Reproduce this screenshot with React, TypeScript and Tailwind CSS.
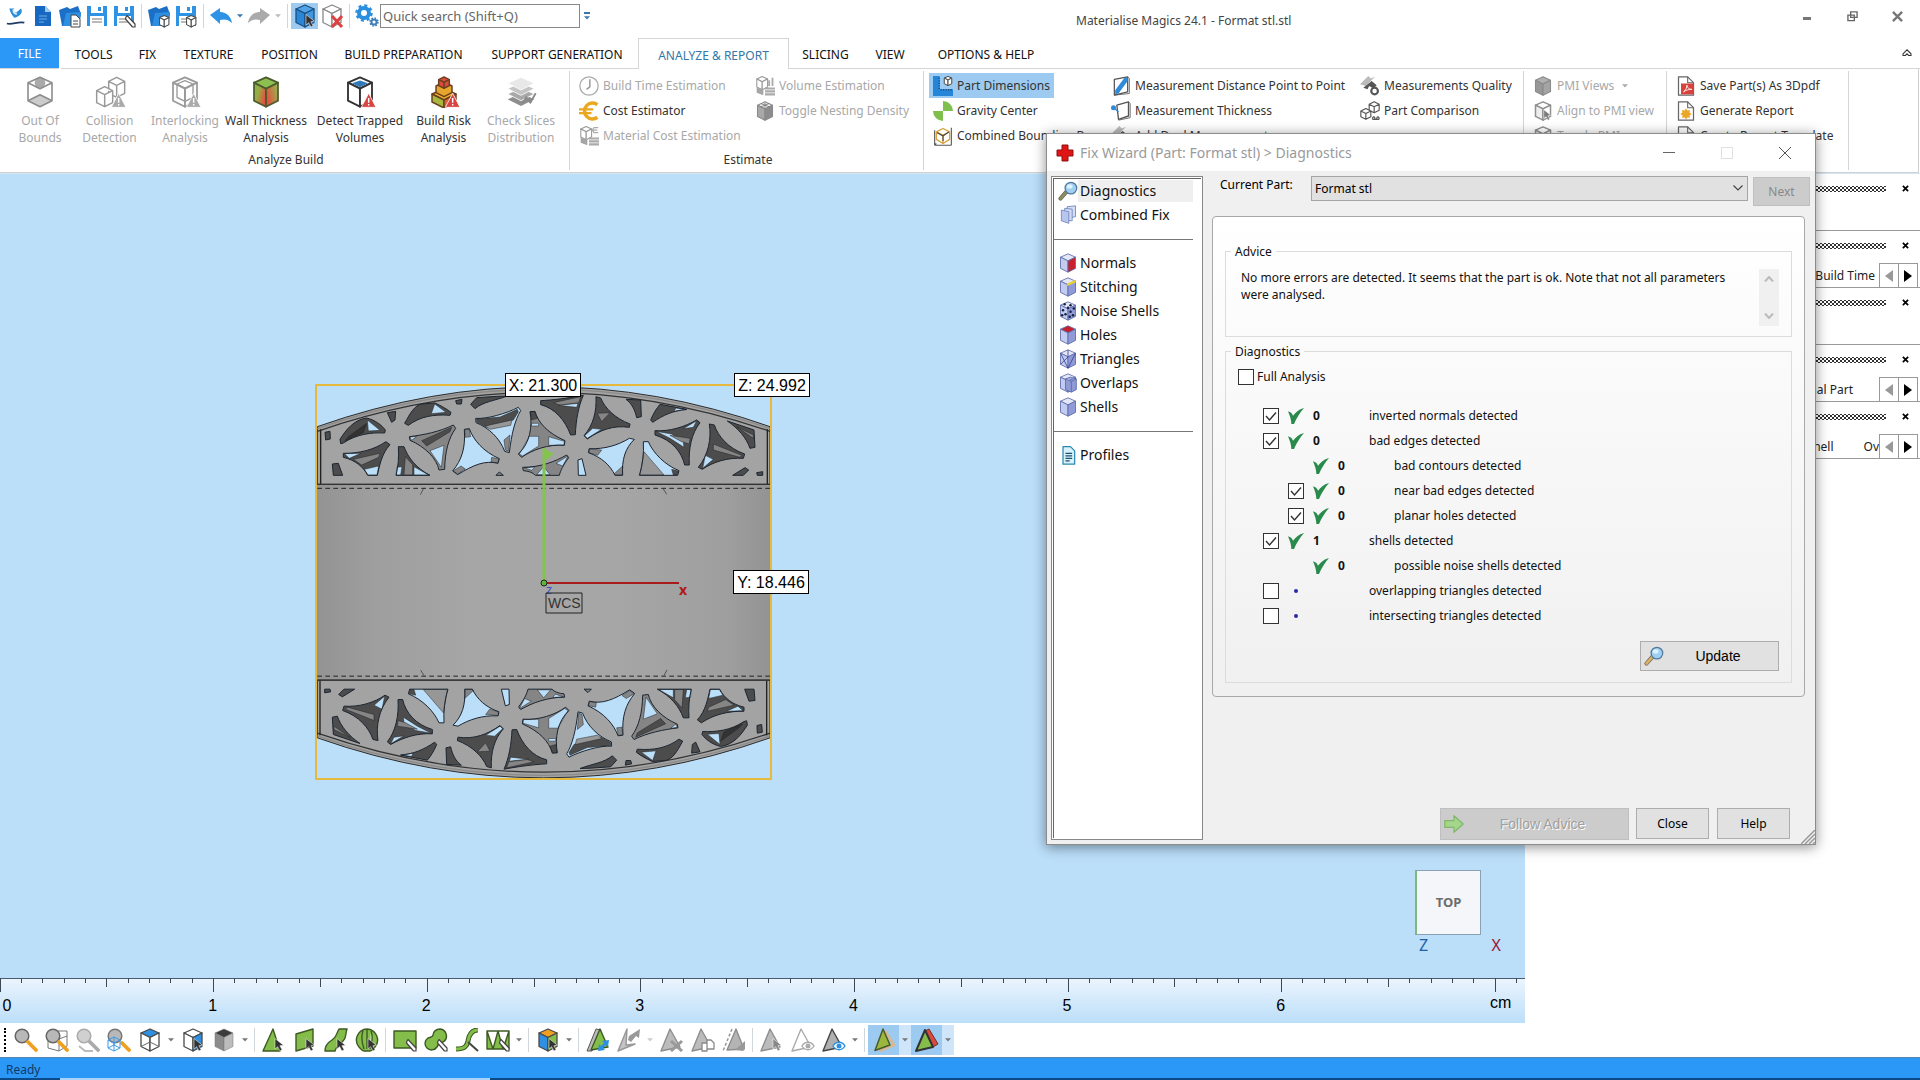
import React from 'react';
import clsx from 'clsx';

type IconProps = { className?: string };

/* ---------- icon primitives ---------- */

const Svg = ({
  className = 'size-6',
  children,
}: IconProps & { children: React.ReactNode }) => (
  <svg
    viewBox="0 0 24 24"
    className={clsx('shrink-0', className)}
    fill="none"
    strokeLinejoin="round"
    aria-hidden="true"
  >
    {children}
  </svg>
);

type CubeProps = {
  top?: string;
  left?: string;
  right?: string;
  stroke?: string;
  width?: number;
};

const Cube = ({
  top = '#fff',
  left = '#fff',
  right = '#fff',
  stroke = '#4a4a4a',
  width = 1.3,
}: CubeProps) => (
  <g stroke={stroke} strokeWidth={width}>
    <path d="M12 1 21 5 12 9.500 3 5Z" fill={top} />
    <path d="M3 5 12 9.500V23L3 18.500Z" fill={left} />
    <path d="M21 5 12 9.500V23L21 18.500Z" fill={right} />
  </g>
);

const Cursor = ({ color = '#333' }: { color?: string }) => (
  <path
    d="M13 10.500v10.500l2.700-2.300 2.200 4.300 2.200-1.200-2.200-4.100 3.500-.500Z"
    fill={color}
    stroke="#fff"
    strokeWidth=".5"
  />
);

const Warning = ({ color = '#d64541' }: { color?: string }) => (
  <g>
    <path d="M18.500 13 24 23.500H13Z" fill={color} stroke="#fff" strokeWidth=".6" />
    <path d="M18.500 16.500v3.500M18.500 21v1.200" stroke="#fff" strokeWidth="1.100" />
  </g>
);

const Pencil = () => (
  <path
    d="m14 13 1-1.500 8 8.500v3h-2.500l-7-8Z"
    fill="#fff"
    stroke="#444"
    strokeWidth="1.200"
  />
);

const Tri = ({ fill, stroke }: { fill: string; stroke: string }) => (
  <path d="M11 1 3 22.500 18 17Z" fill={fill} stroke={stroke} strokeWidth="1.500" />
);

const Caret = ({ color = '#777' }: { color?: string }) => (
  <svg viewBox="0 0 8 5" className="h-1 w-[6px]" aria-hidden="true">
    <path d="M0 0h8L4 4.500Z" fill={color} />
  </svg>
);

/* ---------- quick access icons ---------- */

const AppMark = () => (
  <Svg className="size-5">
    <path d="M4 3h6c-2 3 0 4 2 5l6-5c3 4-1 10-8 11C7 11 5 7 4 3Z" fill="#2b8fd8" />
    <path d="M9 4c-1 3 1 5 4 6" stroke="#d9effc" strokeWidth="2" />
    <path d="M1 21c7 2 13-3 21-1" stroke="#1f3c66" strokeWidth="2" />
  </Svg>
);

const FilePage = () => (
  <Svg className="size-6">
    <path d="M4 2h10l6 6v14H4Z" fill="#1668c0" />
    <path d="M14 2v6h6Z" fill="#9ccbf5" />
    <path d="M8 12h8M8 15h8M8 18h5" stroke="#6daee6" strokeWidth="1" />
  </Svg>
);

const Folder = ({ part = false }: { part?: boolean }) => (
  <Svg className="size-6">
    <path d="M1 6 9 3l3 2 8-3 3 8-2 12H4Z" fill="#1b6fc4" />
    <path d="m5 22 3-13 15-1-2 14Z" fill="#2e8fe2" />
    {part ? (
      <g transform="translate(11 11) scale(.52)">
        <Cube width={2} />
      </g>
    ) : (
      <path d="M13 11h5l4 4v8h-9ZM15 17h5M15 20h5" fill="#fff" stroke="#444" />
    )}
  </Svg>
);

const Disk = ({ part = false, edit = false }: { part?: boolean; edit?: boolean }) => (
  <Svg className="size-6">
    <path d="M2 2h20v20H2Z" fill="#2e93e4" />
    <path d="M6 2h12v7H6Z" fill="#fff" />
    <path d="M13 3h3v4h-3Z" fill="#2e93e4" />
    <path d="M5 12h14v10H5Z" fill="#fff" />
    <path d="M7 15h10M7 18h10" stroke="#777" strokeWidth="1.200" />
    {part && (
      <g transform="translate(11 11) scale(.52)">
        <Cube width={2} />
      </g>
    )}
    {edit && <Pencil />}
  </Svg>
);

const Undo = ({ color }: { color: string }) => (
  <Svg className="size-6">
    <path d="M1 11 11 4v4c7 0 11 5 12 11-4-4-8-4-12-3v4Z" fill={color} />
  </Svg>
);

const Redo = ({ color }: { color: string }) => (
  <Svg className="size-6">
    <path d="M23 11 13 4v4C6 8 2 13 1 19c4-4 8-4 12-3v4Z" fill={color} />
  </Svg>
);

const SelectPart = () => (
  <Svg className="size-6">
    <Cube top="#4fa3e6" left="#2a86d6" right="#3f97e0" stroke="#1d4f80" />
    <Cursor />
  </Svg>
);

const UnloadPart = () => (
  <Svg className="size-6">
    <Cube stroke="#888" />
    <path d="m12 12 10 11M22 12 12 23" stroke="#e04040" strokeWidth="3" />
  </Svg>
);

const Gears = () => (
  <Svg className="size-6">
    <circle cx="9" cy="9" r="5" stroke="#2b8fe0" strokeWidth="4" />
    <circle cx="9" cy="9" r="7.500" stroke="#2b8fe0" strokeWidth="2.500" strokeDasharray="3 2.900" />
    <circle cx="19" cy="18" r="2.600" stroke="#3d7fb8" strokeWidth="2" />
    <circle cx="19" cy="18" r="4" stroke="#3d7fb8" strokeWidth="1.500" strokeDasharray="1.600 1.540" />
  </Svg>
);

/* ---------- ribbon icons ---------- */

const OutOfBounds = () => (
  <Svg className="size-8">
    <circle cx="12" cy="5" r="4" fill="#aaa" />
    <path d="M3 18.500 12 14l9 4.500L12 23Z" fill="#ccc" />
    <path
      d="M12 1 21 5v13.500L12 23 3 18.500V5ZM3 5l9 4.500L21 5M3 18.500l9-4.500 9 4.500"
      stroke="#8d8d8d"
      strokeWidth="1.200"
    />
  </Svg>
);

const Collision = () => (
  <Svg className="size-8">
    <g stroke="#999" strokeWidth="1.100" fill="#fff">
      <path d="m17 1 6 3v9l-6 3-6-3V4ZM11 4l6 3 6-3M17 7v9" />
      <path d="m8 8 6 3v9l-6 3-6-3v-9ZM2 11l6 3 6-3M8 14v9" />
    </g>
    <Warning color="#aaa" />
  </Svg>
);

const Interlocking = () => (
  <Svg className="size-8">
    <Cube stroke="#999" />
    <path d="m12 3.500 6 2.500v10l-6 3-6-3V6ZM6 6l6 3 6-3M12 9v10" stroke="#999" />
    <Warning color="#aaa" />
  </Svg>
);

const WallThickness = () => (
  <Svg className="size-8">
    <defs>
      <linearGradient id="wall-l" x1="0" y1="0" x2="1" y2=".5">
        <stop offset="0" stopColor="#79b94a" />
        <stop offset=".45" stopColor="#9aab45" />
        <stop offset="1" stopColor="#e2513f" />
      </linearGradient>
      <linearGradient id="wall-r" x1="0" y1=".5" x2="1" y2="0">
        <stop offset="0" stopColor="#e2513f" />
        <stop offset="1" stopColor="#8cc152" />
      </linearGradient>
    </defs>
    <Cube top="#8cc152" left="url(#wall-l)" right="url(#wall-r)" stroke="#4c5a2c" />
  </Svg>
);

const Trapped = () => (
  <Svg className="size-8">
    <Cube stroke="#333" width={1.4} />
    <path d="M6 5.500 12 3.300l6 2.200-6 3Z" fill="#2f79b8" />
    <Warning />
  </Svg>
);

const BuildRisk = () => (
  <Svg className="size-8">
    <g stroke="#6a4020" strokeWidth="1.100">
      <path d="m12 9.500 9 4-9 4.500-9-4.500Z" fill="#f0b429" />
      <path d="M3 13.500v6L12 24v-6Z" fill="#a8b83c" />
      <path d="M21 13.500v6L12 24v-6Z" fill="#e0603c" />
      <path d="m12 4.500 6 3v5l-6 3-6-3v-5Z" fill="#e6a52c" />
      <path d="m12 .700 4 2v4.500l-4 2-4-2V2.700Z" fill="#dd4b3e" />
      <path d="m8 2.700 4 2 4-2M12 4.700v4.500" />
    </g>
    <Warning />
  </Svg>
);

const Slices = () => (
  <Svg className="size-8">
    <path d="m12 13 10 4.500-10 5-10-5Z" fill="#8e8e8e" />
    <path d="m12 9 10 4.500-10 5-10-5Z" fill="#a8a8a8" stroke="#fff" strokeWidth=".6" />
    <path d="m12 5 10 4.500-10 5-10-5Z" fill="#c4c4c4" stroke="#fff" strokeWidth=".6" />
    <path d="M12 1 22 5.500l-10 5-10-5Z" fill="#e8e8e8" stroke="#fff" strokeWidth=".6" />
    <path d="m13 21 3-5 3 4 4-7" stroke="#8a8a8a" strokeWidth="1.400" />
  </Svg>
);

const Clock = () => (
  <Svg className="size-5">
    <circle cx="12" cy="12" r="11" stroke="#aaa" strokeWidth="1.500" />
    <path d="M13 4v9l-4 3" stroke="#999" strokeWidth="1.800" />
  </Svg>
);

const Euro = () => (
  <Svg className="size-5">
    <path d="M22 4.500A9.500 9.500 0 1 0 22 19.500" stroke="#eaa820" strokeWidth="4.200" />
    <path d="M0 10h17M0 14.500h15" stroke="#eaa820" strokeWidth="2.600" />
  </Svg>
);

const GreyParts = ({ lines = true }: { lines?: boolean }) => (
  <Svg className="size-5">
    <g transform="scale(.72)">
      <Cube stroke="#999" width={1.8} />
    </g>
    <path d="M2 14v6l8 3v-7Z" fill="#a5a5a5" />
    <path d="M12 15h12M12 18.500h12M12 22h12" stroke="#aaa" strokeWidth="2.600" />
    {lines ? (
      <path d="M23 2h-5l-2 3 2 3h5M15 5h7" stroke="#aaa" strokeWidth="1.400" />
    ) : (
      <path d="M17 5v7M21 2v10" stroke="#aaa" strokeWidth="2.200" />
    )}
  </Svg>
);

const Nesting = () => (
  <Svg className="size-5">
    <Cube top="#eee" left="#a8a8a8" right="#8c8c8c" stroke="#8a8a8a" />
    <path d="M12 2v7M7 3l10 4M17 3 7 7" stroke="#777" />
  </Svg>
);

const Dimensions = () => (
  <Svg className="size-5">
    <path d="M0 0h8v16h16v8H0Z" fill="#2586d8" />
    <path d="M7.500 2v14M9 16.500h15" stroke="#134a80" strokeDasharray="1.500 1.500" strokeWidth="1.600" />
    <g transform="translate(12 0) scale(.5)">
      <Cube width={2.4} />
    </g>
  </Svg>
);

const Gravity = () => (
  <Svg className="size-5">
    <path d="M12 12V0a12 12 0 0 1 12 12Z" fill="#7fbf4d" />
    <path d="M12 12v12A12 12 0 0 1 0 12Z" fill="#7fbf4d" />
  </Svg>
);

const Bounding = () => (
  <Svg className="size-5">
    <path d="M2 23V5M2 23h20M22 2v21M2 23l2-2" stroke="#555" strokeWidth="1.300" />
    <path d="m12 3 8 4v9l-8 5-8-5V7ZM4 7l8 4 8-4M12 11v10" stroke="#d8a33c" strokeWidth="1.600" />
    <path d="m5 8 7 4 7-5M12 12v6" stroke="#444" strokeWidth="1.300" />
  </Svg>
);

const DistancePoint = () => (
  <Svg className="size-5">
    <path d="M4 4 20 1v18L4 23Z" fill="#fff" stroke="#555" strokeWidth="1.500" />
    <path d="M20 1 22 3v18l-18 2" stroke="#555" />
    <path d="M16 2.500 5 17v5l4-1L20 6V2Z" fill="#2e8bd8" />
  </Svg>
);

const Thickness = () => (
  <Svg className="size-5">
    <path d="m7 5 14-4v17L9 22Z" fill="#fff" stroke="#555" strokeWidth="1.600" />
    <path d="m21 1 2 2v17l-14 3" stroke="#555" />
    <circle cx="3" cy="8" r="3" fill="#2e8bd8" />
    <path d="M5 10 9 13" stroke="#2e8bd8" strokeWidth="1.500" />
  </Svg>
);

const Caliper = () => (
  <Svg className="size-5">
    <path d="M0 10 10 0l3 3 5-2-8 8-3 3Z" fill="#bbb" />
    <path d="m4 14 10-8 6 5-4 4-5-3-2 4Z" fill="#555" />
    <circle cx="17.500" cy="18" r="4" stroke="#555" strokeWidth="2.600" />
  </Svg>
);

const Comparison = () => (
  <Svg className="size-5">
    <g stroke="#555" strokeWidth="1.400" fill="#fff">
      <path d="m17 1 6 3v7l-6 3-6-3V4ZM11 4l6 3 6-3M17 7v7" />
      <path d="m7 9 6 3v7l-6 3-6-3v-7ZM1 12l6 3 6-3M7 15v7" />
      <path d="M15 22c0-4 3-4 3 0M20 22c0-4 3-4 3 0M15 22h8" />
    </g>
  </Svg>
);

const PmiCube = () => (
  <Svg className="size-5">
    <Cube top="#b0b0b0" left="#989898" right="#a4a4a4" stroke="#8a8a8a" />
  </Svg>
);

const PmiAlign = () => (
  <Svg className="size-5">
    <Cube stroke="#8f8f8f" left="#eee" width={1.8} />
    <Cursor color="#7a7a7a" />
  </Svg>
);

const Doc = ({ kind }: { kind: 'pdf' | 'report' | 'blank' }) => (
  <Svg className="size-5">
    <path d="M3 1h11l7 7v15H3Z" fill="#fff" stroke="#666" strokeWidth="1.500" />
    <path d="M14 1v7h7" stroke="#666" strokeWidth="1.300" />
    {kind === 'pdf' && (
      <>
        <path d="M6 9h15v13H6Z" fill="#d8423c" />
        <path d="M9 19c3-2 4-5 4-8 1 4 3 5 6 5-4 0-7 1-10 3Z" stroke="#fff" />
      </>
    )}
    {kind === 'report' && (
      <path
        d="m12 9 1.700 2.400 3-.500-.500 3L19 15.500l-2.700 1.700.500 3-3-.500L12 22l-1.700-2.300-3 .500.500-3L5 15.500l2.700-1.700-.500-3 3 .500Z"
        fill="#eaa72a"
      />
    )}
  </Svg>
);

/* ---------- wizard icons ---------- */

const Magnifier = ({ handle = '#8a8f5a' }: { handle?: string }) => (
  <Svg className="size-5">
    <path d="m3 21 7-8" stroke="#666" strokeWidth="5" strokeLinecap="round" />
    <path d="m3 21 7-8" stroke={handle} strokeWidth="3.200" strokeLinecap="round" />
    <circle cx="15.500" cy="8.500" r="7" fill="#9fd0f2" stroke="#54789c" strokeWidth="1.500" />
    <ellipse cx="14" cy="6.500" rx="3.500" ry="2.500" fill="#dff1fd" />
  </Svg>
);

const lilac = { top: '#e4e7f8', left: '#c3cbf0', right: '#8f9ad6', stroke: '#5a6aa8' };

const WizCube = ({
  children,
  ...rest
}: CubeProps & { children?: React.ReactNode }) => (
  <Svg className="size-5">
    <Cube {...lilac} {...rest} width={1} />
    {children}
  </Svg>
);

const CombinedIcon = () => (
  <Svg className="size-5">
    <g fill="#d5ddf5" stroke="#6c82bd">
      <path d="m11 2 10-1v13l-10 2Z" />
      <path d="m8 4 9 1v14l-9-1Z" />
      <path d="m4 6 9 2v14l-9-3Z" fill="#b8c6ee" />
    </g>
  </Svg>
);

const NoiseIcon = () => (
  <WizCube>
    {[
      [8, 4],
      [15, 5],
      [6, 11],
      [9, 16],
      [5, 17],
      [15, 13],
      [19, 9],
      [18, 17],
      [14, 19],
      [12, 8],
    ].map(([x, y]) => (
      <circle key={`${x}-${y}`} cx={x} cy={y} r="1.500" fill="#16213f" />
    ))}
  </WizCube>
);

const ProfilesIcon = () => (
  <Svg className="size-5">
    <path d="M6 2h9l5 5v16H6Z" fill="#d9f1fa" stroke="#2b8ab0" strokeWidth="1.500" />
    <path d="M9 10h8M9 13h8M9 16h8M9 19h5" stroke="#1d4f70" strokeWidth="1.300" />
  </Svg>
);

const GreenCheck = () => (
  <Svg className="size-4">
    <path d="M0 5c4 1 6 3 7.500 6.500C11 7 16 2 24 0 18 7 13 15 9 24H5C5 18 3 12 0 5Z" fill="#2a8a4c" />
  </Svg>
);

/* ---------- bottom toolbar icons ---------- */

const Zoomer = ({
  grey = false,
  children,
}: {
  grey?: boolean;
  children?: React.ReactNode;
}) => (
  <Svg>
    {children}
    <circle cx="8" cy="8" r="6.800" fill={grey ? '#d0d0d0' : '#b8b8b8'} stroke={grey ? '#aaa' : '#666'} strokeWidth="1.500" />
    <path d="m14 14 8 8" stroke={grey ? '#aaa' : '#f0a020'} strokeWidth="3.800" strokeLinecap="round" />
  </Svg>
);

const GREEN = '#84bd4a';
const DARK = '#3d5a22';

const Mark = {
  triangle: 'M11 1 1 23h17Z',
  plane: 'M3 6 20 1v17L3 23Z',
  surface: 'M23 1H15C12 6 13 9 8 12 3 15 1 18 1 23h10c1-5 8-8 10-13 1-3 1-6 2-9Z',
  shell: 'M12 1a11 11 0 0 0-8 18c2 2 3 4 5 4h6c2 0 3-2 5-4A11 11 0 0 0 12 1ZM12 1v20M8 3c-2 5-1 12 1 18M16 3c2 5 1 12-1 18',
  rect: 'M1 3h22v17H1Z',
  blob: 'M16 1a7 7 0 0 1 3 13c-3 1-5 2-6 5a6.500 6.500 0 1 1-9-9c3-1 5-1 5-3 0-3 3-6 7-6Z',
  zigzag: 'M1 3h22v18H1ZM1 3l6 18L12 3l5 18 6-18',
};

const MarkIcon = ({ d, tool }: { d: string; tool: 'cursor' | 'pencil' }) => (
  <Svg>
    <path d={d} fill={GREEN} stroke={DARK} strokeWidth="1.400" />
    {tool === 'cursor' ? <Cursor /> : <Pencil />}
  </Svg>
);

const CurveMark = () => (
  <Svg>
    <path d="M1 21c9 0 11-3 12-8 1-6 4-11 10-11" stroke={DARK} strokeWidth="5" />
    <path d="M1 21c9 0 11-3 12-8 1-6 4-11 10-11" stroke={GREEN} strokeWidth="2.800" />
    <path d="m13 14 10 9" stroke="#444" strokeWidth="2" />
  </Svg>
);

const GreyTri = ({ children, fill = '#bcbcbc', stroke = '#8e8e8e' }: {
  children?: React.ReactNode;
  fill?: string;
  stroke?: string;
}) => (
  <Svg>
    <path d="M10 1 1 23l19-4Z" fill={fill} stroke={stroke} strokeWidth="1.400" />
    {children}
  </Svg>
);

const Eye = ({ color }: { color: string }) => (
  <g>
    <path d="M11 18c3-5 9-5 12 0-3 5-9 5-12 0Z" fill="#fff" stroke={color} strokeWidth="1.400" />
    <circle cx="17" cy="18" r="2.500" fill={color} />
  </g>
);

/* ---------- title bar and tabs ---------- */

const Divider = () => <span className="h-6 w-px bg-gray-300" />;

const QatButton = ({
  label,
  active,
  children,
}: {
  label: string;
  active?: boolean;
  children: React.ReactNode;
}) => (
  <button
    type="button"
    aria-label={label}
    className={clsx(
      'grid h-[26px] w-[27px] shrink-0 place-items-center',
      active && 'bg-[#9ccaf0]',
    )}
  >
    {children}
  </button>
);

const Gap = ({ children }: { children: React.ReactNode }) => (
  <span className="grid w-2 shrink-0 place-items-center">{children}</span>
);

const TitleBar = () => (
  <header className="flex h-[38px] items-start">
    <div className="flex items-center pt-[3px] pl-[2px]">
      <QatButton label="Magics"><AppMark /></QatButton>
      <QatButton label="New"><FilePage /></QatButton>
      <QatButton label="Load project"><Folder /></QatButton>
      <QatButton label="Save project"><Disk /></QatButton>
      <QatButton label="Save project as"><Disk edit /></QatButton>
      <Gap><Divider /></Gap>
      <QatButton label="Import part"><Folder part /></QatButton>
      <QatButton label="Save part as"><Disk part /></QatButton>
      <Gap><Divider /></Gap>
      <QatButton label="Undo"><Undo color="#2e93e4" /></QatButton>
      <span className="grid w-[11px] place-items-center"><Caret color="#3a78ad" /></span>
      <QatButton label="Redo"><Redo color="#aaa" /></QatButton>
      <span className="grid w-[11px] place-items-center"><Caret color="#bbb" /></span>
      <Gap><Divider /></Gap>
      <QatButton label="Select part" active><SelectPart /></QatButton>
      <QatButton label="Unload part"><UnloadPart /></QatButton>
      <Gap><Divider /></Gap>
      <QatButton label="Settings"><Gears /></QatButton>
      <input
        type="text"
        aria-label="Quick search"
        placeholder="Quick search (Shift+Q)"
        className="h-6 w-[200px] border border-[#888] px-[2px] text-[13px] placeholder:text-[#666]"
      />
      <span className="ml-1 flex flex-col items-center gap-[2px]">
        <span className="h-[2px] w-[6px] bg-[#3a78ad]" />
        <Caret color="#3a78ad" />
      </span>
    </div>
    <h1 className="ml-[486px] flex-1 pt-3 text-xs leading-[17px] whitespace-nowrap text-[#444]">
      Materialise Magics 24.1 - Format stl.stl
    </h1>
    <div className="flex items-center gap-[33px] pt-2 pr-[17px]">
      <button type="button" aria-label="Minimize" className="grid h-4 w-3 place-items-center">
        <span className="mt-1 h-[3px] w-2 bg-[#777]" />
      </button>
      <button type="button" aria-label="Restore" className="grid h-4 w-3 place-items-center">
        <svg viewBox="0 0 12 12" className="size-[11px]" fill="#fff" stroke="#666" strokeWidth="1.500">
          <path d="M4 1h7v6H4ZM1 4.500h7v6H1Z" />
        </svg>
      </button>
      <button type="button" aria-label="Close window" className="grid h-4 w-3 place-items-center">
        <svg viewBox="0 0 12 12" className="size-[11px]" stroke="#777" strokeWidth="2.600">
          <path d="m1 1 10 10M11 1 1 11" />
        </svg>
      </button>
    </div>
  </header>
);

const tabs = [
  { label: 'TOOLS', width: 'w-[65px]' },
  { label: 'FIX', width: 'w-[43px]' },
  { label: 'TEXTURE', width: 'w-[79px]' },
  { label: 'POSITION', width: 'w-[83px]' },
  { label: 'BUILD PREPARATION', width: 'w-[145px]' },
  { label: 'SUPPORT GENERATION', width: 'w-[162px]' },
  { label: 'ANALYZE & REPORT', width: 'w-[151px]', active: true },
  { label: 'SLICING', width: 'w-[73px]' },
  { label: 'VIEW', width: 'w-[56px]' },
  { label: 'OPTIONS & HELP', width: 'w-[136px]' },
];

const TabRow = () => (
  <nav className="flex h-[31px] text-xs">
    <button
      type="button"
      className="mr-[2px] w-[59px] border-b border-[#d5d5d5] bg-[#2b98f8] pt-px text-white"
    >
      FILE
    </button>
    {tabs.map(({ label, width, active }) => (
      <button
        key={label}
        type="button"
        className={clsx(
          'pt-1 whitespace-nowrap',
          width,
          active
            ? 'border-x border-t border-[#d5d5d5] text-[#3277a8]'
            : 'border-b border-[#d5d5d5] text-[#111]',
        )}
      >
        {label}
      </button>
    ))}
    <div className="flex flex-1 items-center justify-end border-b border-[#d5d5d5] pr-2">
      <button type="button" aria-label="Collapse ribbon">
        <svg viewBox="0 0 12 10" className="h-2 w-[10px]" fill="none" stroke="#333" strokeWidth="1.300">
          <path d="M1 6 6 1l5 5v2H8L6 6 4 8H1Z" />
        </svg>
      </button>
    </div>
  </nav>
);

/* ---------- ribbon ---------- */

const BigButton = ({
  lines,
  width,
  icon,
  disabled,
}: {
  lines: [string, string];
  width: string;
  icon: React.ReactNode;
  disabled?: boolean;
}) => (
  <button
    type="button"
    disabled={disabled}
    className={clsx(
      'flex shrink-0 flex-col items-center pt-[5px] text-xs leading-[17px] whitespace-nowrap',
      width,
      disabled ? 'text-[#a8a8a8]' : 'text-[#333]',
    )}
  >
    {icon}
    <span className="mt-1">{lines[0]}</span>
    <span>{lines[1]}</span>
  </button>
);

const SmallButton = ({
  label,
  icon,
  disabled,
  active,
  caret,
}: {
  label: string;
  icon: React.ReactNode;
  disabled?: boolean;
  active?: boolean;
  caret?: boolean;
}) => (
  <button
    type="button"
    disabled={disabled}
    className={clsx(
      'flex h-[25px] items-center gap-1 px-1 text-xs whitespace-nowrap',
      disabled ? 'text-[#a8a8a8]' : 'text-[#333]',
      active && 'bg-[#9ccaf0]',
    )}
  >
    {icon}
    {label}
    {caret && <span className="ml-1"><Caret color="#aaa" /></span>}
  </button>
);

const Group = ({
  title,
  width,
  children,
}: {
  title?: string;
  width: string;
  children: React.ReactNode;
}) => (
  <section className={clsx('my-[2px] flex shrink-0 flex-col border-r border-[#d5d5d5]', width)}>
    <div className="flex h-[80px]">{children}</div>
    <h2 className="pl-[3px] text-center text-xs leading-5 text-[#333]">{title}</h2>
  </section>
);

const Column = ({ width, children }: { width: string; children: React.ReactNode }) => (
  <div className={clsx('flex shrink-0 flex-col items-start pt-[2px]', width)}>{children}</div>
);

const Ribbon = () => (
  <div className="mr-px flex h-[104px] border-r border-b border-[#d0d0d0]">
    <Group title="Analyze Build" width="w-[570px]">
      <div className="flex pl-[5px]">
        <BigButton lines={['Out Of', 'Bounds']} width="w-[70px]" icon={<OutOfBounds />} disabled />
        <BigButton lines={['Collision', 'Detection']} width="w-[69px]" icon={<Collision />} disabled />
        <BigButton lines={['Interlocking', 'Analysis']} width="w-[82px]" icon={<Interlocking />} disabled />
        <BigButton lines={['Wall Thickness', 'Analysis']} width="w-[80px]" icon={<WallThickness />} />
        <BigButton lines={['Detect Trapped', 'Volumes']} width="w-[108px]" icon={<Trapped />} />
        <BigButton lines={['Build Risk', 'Analysis']} width="w-[59px]" icon={<BuildRisk />} />
        <BigButton lines={['Check Slices', 'Distribution']} width="w-[96px]" icon={<Slices />} disabled />
      </div>
    </Group>
    <Group title="Estimate" width="w-[354px]">
      <Column width="w-[181px] pl-[5px]">
        <SmallButton label="Build Time Estimation" icon={<Clock />} disabled />
        <SmallButton label="Cost Estimator" icon={<Euro />} />
        <SmallButton label="Material Cost Estimation" icon={<GreyParts />} disabled />
      </Column>
      <Column width="w-[170px]">
        <SmallButton label="Volume Estimation" icon={<GreyParts lines={false} />} disabled />
        <SmallButton label="Toggle Nesting Density" icon={<Nesting />} disabled />
      </Column>
    </Group>
    <Group width="w-[600px]">
      <Column width="w-[182px] pl-[5px]">
        <SmallButton label="Part Dimensions" icon={<Dimensions />} active />
        <SmallButton label="Gravity Center" icon={<Gravity />} />
        <SmallButton label="Combined Bounding Box" icon={<Bounding />} />
      </Column>
      <Column width="w-[250px] pl-[1px]">
        <SmallButton label="Measurement Distance Point to Point" icon={<DistancePoint />} />
        <SmallButton label="Measurement Thickness" icon={<Thickness />} />
        <SmallButton label="Add Dual Measurement" icon={<Caliper />} />
      </Column>
      <Column width="w-[160px]">
        <SmallButton label="Measurements Quality" icon={<Caliper />} />
        <SmallButton label="Part Comparison" icon={<Comparison />} />
      </Column>
    </Group>
    <Group width="w-[143px]">
      <Column width="w-[142px] pl-[5px]">
        <SmallButton label="PMI Views" icon={<PmiCube />} disabled caret />
        <SmallButton label="Align to PMI view" icon={<PmiAlign />} disabled />
        <SmallButton label="Toggle PMI" icon={<PmiAlign />} disabled />
      </Column>
    </Group>
    <Group width="w-[182px]">
      <Column width="w-[180px] pl-[5px]">
        <SmallButton label="Save Part(s) As 3Dpdf" icon={<Doc kind="pdf" />} />
        <SmallButton label="Generate Report" icon={<Doc kind="report" />} />
        <SmallButton label="Create Report Template" icon={<Doc kind="blank" />} />
      </Column>
    </Group>
  </div>
);

/* ---------- 3D part ---------- */

const SHADE = '#4c4c4c';
const MID = '#858585';
const SKY = '#bbdef9';

// cut-outs of the lattice band, drawn at three units per pixel
const holes: { d: string; fill: string }[] = [
  { d: 'M75 187 90 184 91 207 77 210Z', fill: SHADE },
  { d: 'M97 282 115 280 128 316 100 316Z', fill: SHADE },
  { d: 'M120 208C138 180 160 150 200 144 225 150 245 165 256 180L254 189C215 187 170 192 130 219L122 221Z', fill: SHADE },
  { d: 'M262 128 287 124 285 150 275 157Z', fill: SHADE },
  { d: 'M314 160C330 130 345 105 365 102L405 99C425 108 445 120 453 127L450 136C400 132 360 140 325 166Z', fill: SHADE },
  { d: 'M467 92 486 88 484 102 470 102Z', fill: SHADE },
  { d: 'M512 103 530 83 590 79 622 78C585 92 550 95 525 116Z', fill: SHADE },
  { d: 'M527 145C560 148 620 130 655 112L662 122C645 150 635 190 628 248L614 244C600 205 565 172 528 158Z', fill: SKY },
  { d: 'M493 178 508 176C520 210 550 245 598 266L594 280C555 270 520 285 473 314L458 303C485 270 497 235 493 178Z', fill: SKY },
  { d: 'M328 200C370 195 420 185 460 165L467 175C445 205 435 245 434 298L417 300C410 265 375 230 330 211Z', fill: MID },
  { d: 'M130 250C180 250 220 240 258 215L270 224C245 250 238 290 232 316L203 316C190 290 165 270 130 262Z', fill: SHADE },
  { d: 'M295 230 312 230C325 265 350 295 390 316L288 316C295 290 297 260 295 230Z', fill: SHADE },
  { d: 'M588 316 598 306 610 316Z', fill: MID },
  { d: 'M690 125 705 124C715 160 745 190 795 212L793 226C745 222 695 240 665 262L655 252C690 220 698 170 690 125Z', fill: MID },
  { d: 'M722 92C760 90 800 85 850 76 835 110 828 150 826 194L812 195C795 150 765 115 722 104Z', fill: SHADE },
  { d: 'M888 80 902 84C915 115 945 145 990 162L988 172C940 165 900 180 862 207L852 197C880 165 890 125 888 80Z', fill: SHADE },
  { d: 'M978 88 1022 90 1024 140 1010 143C1005 120 995 100 978 88Z', fill: SHADE },
  { d: 'M1052 150C1060 130 1070 115 1080 103L1160 118C1120 122 1090 135 1058 157Z', fill: SHADE },
  { d: 'M1065 182C1110 185 1155 170 1190 150L1200 158C1175 190 1165 235 1168 285L1154 285C1145 245 1115 210 1065 195Z', fill: SHADE },
  { d: 'M988 205 1003 208C975 235 965 270 968 316L945 316C930 285 905 262 865 248L868 236C915 238 955 225 988 205Z', fill: SKY },
  { d: 'M1030 215 1045 215C1060 250 1095 285 1137 302L1133 316 1018 316C1028 285 1032 250 1030 215Z', fill: SKY },
  { d: 'M1228 162 1243 165C1255 200 1285 235 1334 252L1330 265C1285 262 1240 275 1207 298L1195 292C1225 255 1235 205 1228 162Z', fill: SHADE },
  { d: 'M1282 153 1362 180 1365 232 1350 235C1340 205 1315 175 1282 153Z', fill: SHADE },
  { d: 'M1298 316 1335 293 1346 300 1330 316Z', fill: SHADE },
  { d: 'M1370 308 1388 305 1388 316 1372 316Z', fill: SHADE },
  { d: 'M668 292C720 292 765 275 800 255L806 263C790 285 782 300 778 316L706 316C700 308 685 303 670 302Z', fill: MID },
  { d: 'M834 270 846 266 858 316 835 316Z', fill: SKY },
];

// what shows through those cut-outs: the far wall and the background
const seenThrough: { d: string; fill: string }[] = [
  { d: 'M202 150 240 181 205 183Z', fill: SKY },
  { d: 'M145 200 200 160 190 188 135 212Z', fill: '#333' },
  { d: 'M404 102 438 127 394 131Z', fill: SKY },
  { d: 'M530 147 600 141 652 118 655 126 640 150 560 172 530 156Z', fill: SHADE },
  { d: 'M556 168 636 150 632 166 570 178Z', fill: '#979797' },
  { d: 'M612 210 630 195 626 244 616 240Z', fill: MID },
  { d: 'M494 179 507 177 512 200 496 202Z', fill: MID },
  { d: 'M459 303 483 288 496 297 473 312Z', fill: MID },
  { d: 'M575 262 597 267 593 279 573 276Z', fill: MID },
  { d: 'M330 201 350 199 335 211Z', fill: SKY },
  { d: 'M365 212 455 172 450 185 380 228Z', fill: SHADE },
  { d: 'M390 242 432 226 424 292Z', fill: SKY },
  { d: 'M133 251 183 250 148 265Z', fill: SKY },
  { d: 'M160 268 240 250 236 262 185 285Z', fill: MID },
  { d: 'M193 298 236 288 231 315 204 315Z', fill: SKY },
  { d: 'M290 292 306 290 302 315 289 315Z', fill: SKY },
  { d: 'M316 260 338 284 338 315 312 315Z', fill: MID },
  { d: 'M342 290 386 315 342 315Z', fill: SKY },
  { d: 'M691 126 704 125 712 145 695 150Z', fill: SHADE },
  { d: 'M695 160 716 160 716 168 694 168Z', fill: SKY },
  { d: 'M688 199 716 199 716 228 668 258 658 252Z', fill: SKY },
  { d: 'M746 200 793 214 792 225 746 226Z', fill: SKY },
  { d: 'M776 106 834 100 830 112Z', fill: SKY },
  { d: 'M760 98 842 80 836 98 780 105Z', fill: MID },
  { d: 'M892 130 930 128 905 155Z', fill: MID },
  { d: 'M878 175 905 178 862 205 854 197Z', fill: SKY },
  { d: 'M1128 114 1160 119 1122 124Z', fill: SKY },
  { d: 'M1068 184 1115 192 1150 215 1152 232 1110 205Z', fill: SKY },
  { d: 'M1110 196 1170 205 1168 222 1145 215Z', fill: MID },
  { d: 'M1150 176 1190 152 1180 172Z', fill: SKY },
  { d: 'M867 237 905 240 893 256 867 248Z', fill: MID },
  { d: 'M942 312 968 288 967 315 946 315Z', fill: MID },
  { d: 'M1032 245 1092 315 1020 315Z', fill: '#979797' },
  { d: 'M1115 298 1135 303 1132 315 1120 315Z', fill: SHADE },
  { d: 'M1216 256 1240 268 1208 295Z', fill: SKY },
  { d: 'M1240 222 1325 256 1320 262 1240 240Z', fill: MID },
  { d: 'M1310 170 1360 195 1360 205Z', fill: MID },
  { d: 'M672 293 704 291 696 301Z', fill: SKY },
  { d: 'M710 314 731 290 750 314Z', fill: SKY },
  { d: 'M768 280 804 258 788 288Z', fill: SKY },
];

const LatticeBand = () => (
  <g>
    <path d="M52 170Q731-70 1410 170V343H52Z" fill="#a3a3a3" stroke="#2b2b2b" strokeWidth="3" />
    <path d="M52 184Q731-50 1410 184" fill="none" stroke="#333" strokeWidth="3.500" />
    <path d="M52 176Q731-61 1410 176" fill="none" stroke="#8b8b8b" strokeWidth="4" />
    {holes.map(({ d, fill }) => (
      <path key={d} d={d} fill={fill} />
    ))}
    {seenThrough.map(({ d, fill }) => (
      <path key={d} d={d} fill={fill} stroke="#222" strokeWidth="1.500" />
    ))}
    {holes.map(({ d }) => (
      <path key={d} d={d} fill="none" stroke="#1c2530" strokeWidth="3" />
    ))}
    <path d="M62 178V343M1402 178V343" stroke="#222" strokeWidth="4" />
    <path d="M52 343H1410" stroke="#333" strokeWidth="3.500" />
    <path d="M52 355H1410" stroke="#222" strokeWidth="3" strokeDasharray="14 10" />
    <path d="M370 357 361 374M1090 357 1100 373" stroke="#444" strokeWidth="2.500" />
  </g>
);

const PartView = () => (
  <svg viewBox="0 0 520 420" className="h-[420px] w-[520px]" role="img" aria-label="Format stl">
    <defs>
      <linearGradient id="body">
        <stop offset="0" stopColor="#939393" />
        <stop offset=".12" stopColor="#9e9e9e" />
        <stop offset=".35" stopColor="#a6a6a6" />
        <stop offset=".65" stopColor="#a6a6a6" />
        <stop offset=".9" stopColor="#9f9f9f" />
        <stop offset="1" stopColor="#939393" />
      </linearGradient>
    </defs>
    <path d="M17 113H470V312H17Z" fill="url(#body)" />
    <g transform="scale(.33333)">
      <LatticeBand />
    </g>
    <g transform="translate(487.333 424.500) rotate(180) scale(.33333)">
      <LatticeBand />
    </g>
    <path d="M16 15H471V409H16Z" fill="none" stroke="#e6b83c" strokeWidth="2" />
    <path d="M244 78V212" stroke="#84c44e" strokeWidth="3" />
    <path d="M243 78 254 84 243 92Z" fill="#84c44e" />
    <path d="M244 213H379" stroke="#a81c1c" strokeWidth="2" />
    <circle cx="244" cy="213" r="3" fill="#5cb83c" stroke="#222" />
    <text x="379" y="225" fontSize="14" fontWeight="700" fill="#b01818">x</text>
    <text x="246" y="224" fontSize="13" fill="#3c50c8">z</text>
    <path d="M246 223H282V243H246Z" fill="none" stroke="#222" strokeWidth="1" />
    <text x="248" y="238" fontSize="14" fill="#333" fontFamily="Liberation Sans, sans-serif">WCS</text>
  </svg>
);

const Dimension = ({ text, className }: { text: string; className: string }) => (
  <span
    className={clsx(
      "absolute grid h-6 w-[76px] place-items-center border border-black bg-white font-['Liberation_Sans',sans-serif] text-base whitespace-nowrap text-black",
      className,
    )}
  >
    {text}
  </span>
);

const Ruler = () => {
  const ticks = Array.from({ length: 72 }, (_, i) => i);
  return (
    <svg
      className="h-[45px] w-full bg-linear-to-b from-[#ecf5fd] to-[#bbdef9]"
      role="img"
      aria-label="Ruler in centimetres"
    >
      <path d="M0 .500H4000" stroke="#4a5a70" />
      {ticks.map((i) => {
        const x = Math.floor(i * 21.36) + 0.5;
        const end = i % 10 === 0 ? 14 : i % 5 === 0 ? 9 : 5;
        return <path key={i} d={`M${x} 0V${end}`} stroke="#3c4858" />;
      })}
      <g fontSize="16" fill="#000" fontFamily="Liberation Sans, sans-serif">
        {[0, 1, 2, 3, 4, 5, 6].map((n) => (
          <text key={n} x={n === 0 ? 7 : n * 213.6 - 1} y="33" textAnchor="middle">
            {n}
          </text>
        ))}
        <text x="1490" y="30">cm</text>
      </g>
    </svg>
  );
};

const Viewport = () => (
  <main className="flex min-w-0 flex-1 flex-col">
    <div className="relative flex-1 bg-[#bbdef9]">
      <div className="absolute top-[196px] left-[300px]">
        <PartView />
        <Dimension text="X: 21.300" className="top-[3px] left-[205px]" />
        <Dimension text="Z: 24.992" className="top-[3px] left-[434px]" />
        <Dimension text="Y: 18.446" className="top-[200px] left-[433px]" />
      </div>
      <div className="absolute right-[24px] bottom-[24px] w-[86px]">
        <button
          type="button"
          className="block h-[65px] w-[66px] border border-l-2 border-[#8aa0b4] border-l-[#7fb87a] bg-[#f4f6f9] text-[13px] font-bold text-[#6c6c6c]"
        >
          TOP
        </button>
        <div className="flex justify-between pt-px pl-1 text-base leading-[18px]">
          <span className="text-[#2060a8]">Z</span>
          <span className="text-[#a01038]">X</span>
        </div>
      </div>
    </div>
    <Ruler />
  </main>
);

/* ---------- docked panels on the right ---------- */

const docks: { tabs?: string[] }[] = [
  {},
  { tabs: ['Build Time'] },
  {},
  { tabs: ['Final Part', ''] },
  { tabs: ['Shell', 'Ov'] },
];

const Dock = ({ tabs: names }: { tabs?: string[] }) => (
  <section className="flex h-[57px] flex-col justify-between border-b border-[#999]">
    <div className="flex items-center gap-3 pt-[11px] pr-[11px]">
      <span className="h-[6px] flex-1 bg-[radial-gradient(#333_1px,transparent_1px),radial-gradient(#333_1px,transparent_1px)] bg-[length:4px_4px] bg-[position:0_0,2px_2px]" />
      <button type="button" aria-label="Close panel" className="ml-1">
        <svg viewBox="0 0 8 8" className="size-[7px]" stroke="#000" strokeWidth="2">
          <path d="m1 1 6 6M7 1 1 7" />
        </svg>
      </button>
    </div>
    {names && (
      <div className="flex h-6 justify-end text-xs text-[#222]">
        {names.length === 1 ? (
          <span className="pt-[5px] pr-1">{names[0]}</span>
        ) : (
          <>
            <span className={clsx('pt-[5px]', names[1] ? 'pr-[30px]' : 'pr-[26px]')}>{names[0]}</span>
            <span className="pt-[5px]">{names[1]}</span>
          </>
        )}
        <button type="button" aria-label="Scroll left" className="grid w-5 place-items-center border border-b-0 border-[#999]">
          <svg viewBox="0 0 8 12" className="h-3 w-2"><path d="M8 0v12L0 6Z" fill="#999" /></svg>
        </button>
        <button type="button" aria-label="Scroll right" className="mr-[2px] grid w-[19px] place-items-center border border-b-0 border-l-0 border-[#999]">
          <svg viewBox="0 0 8 12" className="h-3 w-2"><path d="M0 0v12l8-6Z" fill="#000" /></svg>
        </button>
      </div>
    )}
  </section>
);

/* ---------- fix wizard ---------- */

const wizardPages: ({ label: string; icon: React.ReactNode } | null)[] = [
  { label: 'Diagnostics', icon: <Magnifier /> },
  { label: 'Combined Fix', icon: <CombinedIcon /> },
  null,
  { label: 'Normals', icon: <WizCube right="#c8202c" /> },
  {
    label: 'Stitching',
    icon: (
      <WizCube>
        <path d="m11 9.500 10-4.500" stroke="#e8d23c" strokeWidth="3" />
      </WizCube>
    ),
  },
  { label: 'Noise Shells', icon: <NoiseIcon /> },
  { label: 'Holes', icon: <WizCube top="#c8202c" /> },
  {
    label: 'Triangles',
    icon: (
      <WizCube>
        <path d="M3 5 12 23 21 5M12 1 12 9.500M3 18.500 12 9.500" stroke="#3a3f98" />
      </WizCube>
    ),
  },
  {
    label: 'Overlaps',
    icon: (
      <WizCube>
        <path d="m9 7 6-2 7 2v13l-6 3-7-3ZM9 7l7 3 6-3M16 10v13" fill="#8f9ad6" stroke="#5a6aa8" />
      </WizCube>
    ),
  },
  { label: 'Shells', icon: <WizCube /> },
  null,
  { label: 'Profiles', icon: <ProfilesIcon /> },
];

const WizardNav = () => (
  <nav className="w-[152px] border border-[#888] bg-white p-px">
    <ul className="h-full border-t border-l border-[#666] pr-2 text-sm leading-[22px] text-[#111]">
      {wizardPages.map((page, i) =>
        page ? (
          <li key={page.label} className="h-6 pl-1">
            <button type="button" className="flex h-[23px] w-full items-center">
              {page.icon}
              <span className={clsx('flex-1 pl-[2px] text-left', i === 0 && 'bg-[#efefef]')}>
                {page.label}
              </span>
            </button>
          </li>
        ) : (
          <li key={i} className="flex h-6 items-center">
            <hr className="w-full border-[#777]" />
          </li>
        ),
      )}
    </ul>
  </nav>
);

const Tick = ({ id, checked }: { id: string; checked?: boolean }) => (
  <span className="relative grid size-4 shrink-0 place-items-center">
    <input
      id={id}
      type="checkbox"
      defaultChecked={checked}
      className="peer size-4 appearance-none border border-[#333] bg-white"
    />
    <svg
      viewBox="0 0 16 16"
      className="pointer-events-none absolute hidden size-4 peer-checked:block"
      fill="none"
      stroke="#333"
      strokeWidth="1.400"
    >
      <path d="m3 8 3.500 4L13 4.500" />
    </svg>
  </span>
);

type Check = {
  label: string;
  count?: number;
  box?: boolean;
  checked?: boolean;
  nested?: boolean;
};

const checks: Check[] = [
  { label: 'inverted normals detected', count: 0, box: true, checked: true },
  { label: 'bad edges detected', count: 0, box: true, checked: true },
  { label: 'bad contours detected', count: 0, nested: true },
  { label: 'near bad edges detected', count: 0, box: true, checked: true, nested: true },
  { label: 'planar holes detected', count: 0, box: true, checked: true, nested: true },
  { label: 'shells detected', count: 1, box: true, checked: true },
  { label: 'possible noise shells detected', count: 0, nested: true },
  { label: 'overlapping triangles detected', box: true },
  { label: 'intersecting triangles detected', box: true },
];

function CheckRow({ label, count, box, checked, nested }: Check) {
  const id = label.replace(/ /g, '-');
  return (
    <li className={clsx('flex h-[25px] items-center', nested && 'pl-[25px]')}>
      {box ? <Tick id={id} checked={checked} /> : <span className="w-4" />}
      <span className="grid w-[34px] place-items-center">
        {count === undefined ? (
          <span className="size-1 rounded-full bg-[#2a2aa8]" />
        ) : (
          <GreenCheck />
        )}
      </span>
      <b className="w-14 font-bold">{count}</b>
      {box ? <label htmlFor={id}>{label}</label> : <span>{label}</span>}
    </li>
  );
}

const DIALOG_BUTTON =
  'border border-[#adadad] bg-[#e1e1e1] text-xs text-black';

const WizardBody = () => (
  <div className="flex flex-1 flex-col pl-[9px]">
    <div className="flex items-start pr-[5px]">
      <label htmlFor="current-part" className="w-[99px] pl-2 text-xs leading-[18px]">
        Current Part:
      </label>
      <div className="relative flex-1">
        <select
          id="current-part"
          className="block h-[25px] w-full appearance-none border border-[#a5a5a5] bg-[#e1e1e1] px-[3px] pt-px text-xs text-black"
        >
          <option>Format stl</option>
        </select>
        <svg viewBox="0 0 10 6" className="pointer-events-none absolute top-[9px] right-[5px] h-[6px] w-[10px]" fill="none" stroke="#444" strokeWidth="1.200">
          <path d="m.500.500 4.500 4.500 4.500-4.500" />
        </svg>
      </div>
      <button type="button" disabled className="mt-px ml-[5px] h-[29px] w-[57px] border border-[#bfbfbf] bg-[#ccc] pt-px text-xs text-[#888]">
        Next
      </button>
    </div>

    <div className="mt-[10px] mr-[10px] rounded border border-[#a8a8a8] bg-linear-to-b from-white to-[#f0f0f0] px-3 pt-[26px] pb-[13px] text-xs text-[#111]">
      <fieldset className="h-[94px] border border-[#dcdcdc] pl-[15px]">
        <legend className="-ml-[10px] px-1 leading-[17px]">Advice</legend>
        <div className="flex justify-between pt-[9px] pr-3">
          <p className="leading-[17px] whitespace-nowrap">
            No more errors are detected. It seems that the part is ok. Note that not all parameters
            <br />
            were analysed.
          </p>
          <div className="flex h-[57px] w-5 flex-col items-center justify-between bg-[#f0f0f0] py-[7px]">
            <svg viewBox="0 0 10 6" className="h-[6px] w-[10px]" fill="none" stroke="#bbb" strokeWidth="2">
              <path d="m1 5.500 4-4.500 4 4.500" />
            </svg>
            <svg viewBox="0 0 10 6" className="h-[6px] w-[10px]" fill="none" stroke="#bbb" strokeWidth="2">
              <path d="M1 .500 5 5 9 .500" />
            </svg>
          </div>
        </div>
      </fieldset>
      <fieldset className="mt-[6px] h-[340px] border border-[#dcdcdc] pr-3 pl-3">
        <legend className="-ml-[7px] px-1 leading-[17px]">Diagnostics</legend>
        <div className="flex h-[25px] items-end gap-[3px]">
          <Tick id="full-analysis" />
          <label htmlFor="full-analysis" className="leading-4">Full Analysis</label>
        </div>
        <ul className="mt-[18px] pl-[25px]">
          {checks.map((check) => (
            <CheckRow key={check.label} {...check} />
          ))}
        </ul>
        <div className="mt-[13px] flex justify-end">
          <button type="button" className={clsx('flex h-[30px] w-[139px] items-center pl-[3px]', DIALOG_BUTTON)}>
            <Magnifier handle="#d8b060" />
            <span className="flex-1 pr-[6px] font-['Liberation_Sans',sans-serif] text-sm">Update</span>
          </button>
        </div>
      </fieldset>
    </div>

    <div className="mt-auto flex items-start justify-end pr-[25px]">
      <button type="button" disabled className="mr-[7px] flex h-8 w-[189px] items-center border border-[#bfbfbf] bg-[#ccc] pl-[3px]">
        <Svg className="size-5">
          <path d="M1 8h11V2l11 10-11 10v-6H1Z" fill="#a5d68c" stroke="#7fb868" strokeWidth="1.500" />
        </Svg>
        <span className="flex-1 pr-[7px] font-['Liberation_Sans',sans-serif] text-sm text-[#a0a0a0] [text-shadow:1px_1px_0_#fff]">
          Follow Advice
        </span>
      </button>
      <button type="button" className={clsx('mr-2 h-[31px] w-[73px]', DIALOG_BUTTON)}>Close</button>
      <button type="button" className={clsx('h-[31px] w-[73px]', DIALOG_BUTTON)}>Help</button>
    </div>
  </div>
);

const FixWizard = () => (
  <div
    role="dialog"
    aria-label="Fix Wizard"
    className="absolute top-[133px] right-[104px] flex h-[712px] w-[770px] flex-col border border-[#8c8c8c] bg-[#f0f0f0] shadow-[0_2px_12px_rgba(0,0,0,0.45)]"
  >
    <div className="flex h-[37px] items-center bg-white pr-6 pl-[9px]">
      <svg viewBox="0 0 18 18" className="size-[18px]" aria-hidden="true">
        <path d="M6 1h6v5h5v6h-5v5H6v-5H1V6h5Z" fill="#e01414" stroke="#8c1010" />
      </svg>
      <h2 className="flex-1 pl-[6px] text-sm text-[#9a9a9a]">
        Fix Wizard (Part: Format stl) &gt; Diagnostics
      </h2>
      <div className="flex items-center gap-[46px]">
        <button type="button" aria-label="Minimize wizard" className="grid size-3 place-items-center">
          <span className="h-px w-3 bg-[#666]" />
        </button>
        <button type="button" aria-label="Maximize wizard" disabled className="size-3 border border-[#e0e0e0]" />
        <button type="button" aria-label="Close wizard" className="size-3">
          <svg viewBox="0 0 12 12" className="size-3" stroke="#555"><path d="m0 0 12 12M12 0 0 12" /></svg>
        </button>
      </div>
    </div>
    <div className="flex flex-1 pt-[5px] pb-1 pl-1">
      <WizardNav />
      <WizardBody />
    </div>
    <svg viewBox="0 0 14 14" className="absolute right-0 bottom-0 size-[14px]" stroke="#999" strokeWidth="1.500" aria-hidden="true">
      <path d="M0 14 14 0M4 14 14 4M8 14l6-6M12 14l2-2" />
    </svg>
  </div>
);

/* ---------- bottom toolbar ---------- */

const Tool = ({
  label,
  active,
  children,
}: {
  label: string;
  active?: boolean;
  children: React.ReactNode;
}) => (
  <button
    type="button"
    aria-label={label}
    className={clsx('grid h-[30px] w-[31px] shrink-0 place-items-center', active && 'bg-[#9ccaf0]')}
  >
    {children}
  </button>
);

const Drop = ({ active, faint }: { active?: boolean; faint?: boolean }) => (
  <span className={clsx('grid h-[30px] w-3 shrink-0 place-items-center', active && 'bg-[#cfe5fa]')}>
    <Caret color={faint ? '#ccc' : '#777'} />
  </span>
);

const Sep = () => (
  <span className="grid w-[7px] shrink-0 place-items-center">
    <span className="h-6 w-px bg-gray-300" />
  </span>
);

const Toolbar = () => (
  <div className="flex h-[34px] items-center bg-white">
    <span className="mr-1 ml-1 h-6 w-px border-l-2 border-dotted border-black" />
    <Tool label="Zoom"><Zoomer /></Tool>
    <Tool label="Zoom part">
      <Zoomer><path d="M9 3h13v15l-8 5-11-3V8ZM9 3v12M22 8l-8 3v12" stroke="#777" /></Zoomer>
    </Tool>
    <Tool label="Unzoom"><Zoomer grey><path d="m3 18 6 5h8" stroke="#bbb" strokeWidth="2" /></Zoomer></Tool>
    <Tool label="Zoom all">
      <Svg>
        <circle cx="8" cy="8" r="6.800" fill="#b8b8b8" stroke="#777" strokeWidth="1.500" />
        <path d="m15 15 7 7" stroke="#f0a020" strokeWidth="3.800" strokeLinecap="round" />
        <path d="m7 9 6 3v8l-6 3-6-3v-8ZM1 12l6 3 6-3M7 15v8M7 9v8l6 3M7 17l-6 3" stroke="#3c9ae8" />
      </Svg>
    </Tool>
    <Tool label="View"><Svg><Cube top="#2f8fe0" /><path d="M12 9v5l9 4.500M12 14l-9 4.500" stroke="#666" /></Svg></Tool>
    <Drop />
    <Tool label="Select side"><Svg><Cube right="#2f8fe0" /><Cursor /></Svg></Tool>
    <Tool label="Shading"><Svg><Cube top="#3c3c3c" left="#8c8c8c" right="#bcbcbc" stroke="#777" width={0.5} /></Svg></Tool>
    <Drop />
    <Sep />
    <Tool label="Mark triangle"><MarkIcon d={Mark.triangle} tool="cursor" /></Tool>
    <Tool label="Mark plane"><MarkIcon d={Mark.plane} tool="cursor" /></Tool>
    <Tool label="Mark surface"><MarkIcon d={Mark.surface} tool="cursor" /></Tool>
    <Tool label="Mark shell"><MarkIcon d={Mark.shell} tool="cursor" /></Tool>
    <Sep />
    <Tool label="Rectangle mark"><MarkIcon d={Mark.rect} tool="pencil" /></Tool>
    <Tool label="Freeform mark"><MarkIcon d={Mark.blob} tool="pencil" /></Tool>
    <Tool label="Curve mark"><CurveMark /></Tool>
    <Tool label="Brush mark"><MarkIcon d={Mark.zigzag} tool="pencil" /></Tool>
    <Drop />
    <Sep />
    <Tool label="Mark by color"><Svg><Cube top="#f0a020" left="#2f8fe0" right="#84bd4a" /><Cursor /></Svg></Tool>
    <Drop />
    <Sep />
    <Tool label="Invert marking">
      <Svg>
        <path d="M10 1 1 23h5L15 2Z" fill="#bbb" stroke="#555" />
        <path d="M14 1 5 22l17-3Z" fill={GREEN} stroke={DARK} strokeWidth="1.400" />
        <path d="m16 13 7-1-1 7-2-2-3 3 2 2-7 1 1-7 2 2 3-3Z" fill="#2f8fe0" />
      </Svg>
    </Tool>
    <Tool label="Expand marking">
      <Svg>
        <path d="M10 1 1 23l17-7-9 1Z" fill="#c4c4c4" stroke="#999" strokeWidth="1.500" />
        <path d="m12 8 11-7-1 9-3-2-5 6-3-2Z" fill="#999" />
      </Svg>
    </Tool>
    <Drop faint />
    <Tool label="Delete marked"><GreyTri><path d="m11 13 11 10M22 13 11 23" stroke="#999" strokeWidth="3" /></GreyTri></Tool>
    <Tool label="Copy marked">
      <GreyTri><path d="M11 15h5v8h-5ZM16 12h4l3 3v6h-7Z" fill="#fff" stroke="#888" strokeWidth="1.300" /></GreyTri>
    </Tool>
    <Tool label="Separate marked">
      <Svg>
        <path d="M10 1 1 23" stroke="#999" strokeWidth="1.500" strokeDasharray="3 2" />
        <path d="M14 1 5 22l17-1Z" fill="#b4b4b4" stroke="#8e8e8e" strokeWidth="1.400" />
        <path d="m13 22 10-9v8l-2 2Z" fill="#999" />
      </Svg>
    </Tool>
    <Sep />
    <Tool label="Select marked"><GreyTri><Cursor color="#888" /></GreyTri></Tool>
    <Tool label="Show marked"><GreyTri fill="#fff" stroke="#aaa"><Eye color="#aaa" /></GreyTri></Tool>
    <Tool label="Show all"><GreyTri fill="#b0b0b0" stroke="#444"><Eye color="#2f8fe0" /></GreyTri></Tool>
    <Drop />
    <Sep />
    <Tool label="Highlight marked" active>
      <Svg>
        <path d="m13 3 9 14-15 6" stroke="#d8b88c" strokeWidth="2.500" />
        <Tri fill="#9cb83c" stroke="#4a5a2c" />
      </Svg>
    </Tool>
    <Drop active />
    <Tool label="Show bad edges" active>
      <Svg>
        <path d="m14 1 9 15-5 3L10 3Z" fill="#d84a3c" stroke="#7c2c24" />
        <path d="M10 2 1 23l17-4Z" fill={GREEN} stroke="#333" strokeWidth="2" />
      </Svg>
    </Tool>
    <Drop active />
  </div>
);

export default function App() {
  return (
    <div className="relative flex min-h-screen flex-col overflow-hidden bg-white font-['Noto_Sans','Open_Sans',sans-serif]">
      <TitleBar />
      <TabRow />
      <Ribbon />
      <div className="flex flex-1 border-t border-[#d5e6f5]">
        <Viewport />
        <aside className="w-[395px]">
          {docks.map((dock, i) => (
            <Dock key={i} {...dock} />
          ))}
        </aside>
      </div>
      <Toolbar />
      <footer className="flex h-[21px] items-center border-t border-[#5c87ad] bg-[#2b98f8] pt-[3px] pl-[6px] text-xs text-[#123a66]">
        Ready
      </footer>
      <div className="flex h-[2px] bg-[#0a4a88]">
        <span className="ml-[60px] w-[430px] bg-[#a8d4fa]" />
      </div>
      <FixWizard />
    </div>
  );
}
